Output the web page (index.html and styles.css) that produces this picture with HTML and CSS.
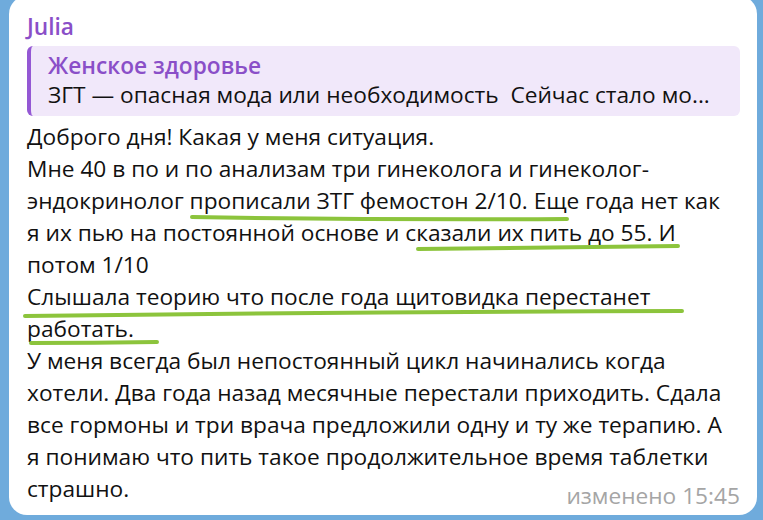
FILE: index.html
```html
<!DOCTYPE html>
<html lang="ru">
<head>
<meta charset="utf-8">
<link rel="stylesheet" href="styles.css">
</head>
<body>
<div class="bubble">
  <div class="author">Julia</div>
  <div class="quote">
    <div class="quote-title">Женское здоровье</div>
    <div class="quote-text">ЗГТ — опасная мода или необходимость&nbsp; Сейчас стало мо...</div>
  </div>
  <div class="body">
    Доброго дня! Какая у меня ситуация.<br>
    Мне 40 в по и по анализам три гинеколога и гинеколог-<br>
    эндокринолог прописали ЗТГ фемостон 2/10. Еще года нет как<br>
    я их пью на постоянной основе и сказали их пить до 55. И<br>
    потом 1/10<br>
    Слышала теорию что после года щитовидка перестанет<br>
    работать.<br>
    У меня всегда был непостоянный цикл начинались когда<br>
    хотели. Два года назад месячные перестали приходить. Сдала<br>
    все гормоны и три врача предложили одну и ту же терапию. А<br>
    я понимаю что пить такое продолжительное время таблетки<br>
    страшно.
  </div>
  <div class="time">изменено 15:45</div>
</div>
<svg class="marks" width="763" height="520" viewBox="0 0 763 520">
  <path d="M192 217 Q380 220 567 219" />
  <path d="M418 249 Q550 248 678 246" />
  <path d="M25 316 Q350 312 682 311" />
  <path d="M31 343 Q95 343 157 342" />
</svg>
</body>
</html>
```

FILE: styles.css
```css
html, body {
  margin: 0;
  padding: 0;
}
body {
  width: 763px;
  height: 520px;
  background: #6fabdc;
  overflow: hidden;
  position: relative;
  font-family: "Open Sans", "Noto Sans", sans-serif;
}
.bubble {
  box-sizing: border-box;
  margin: -4px 0 0 9px;
  width: 748px;
  height: 519px;
  background: #ffffff;
  border-radius: 18px;
  padding: 18px 17px 0 18px;
  display: flex;
  flex-direction: column;
}
.author {
  color: #8a4fc8;
  font-weight: 600;
  font-size: 22.7px;
  line-height: 26px;
}
.quote {
  margin-top: 6px;
  height: 70px;
  box-sizing: border-box;
  background: #f1e8fa;
  border-left: 4px solid #9458d4;
  border-radius: 6px;
  padding: 5px 10px 0 17px;
  white-space: nowrap;
}
.quote-title {
  color: #8a4fc8;
  font-weight: 600;
  font-size: 22.7px;
  line-height: 29px;
}
.quote-text {
  color: #111111;
  font-size: 22.7px;
  line-height: 29px;
}
.body {
  margin-top: 5px;
  color: #111111;
  font-size: 22.7px;
  line-height: 32px;
  white-space: nowrap;
}
.time {
  align-self: flex-end;
  margin-top: -21px;
  color: #a5a5a5;
  font-size: 22.7px;
  line-height: 24px;
}
.marks {
  position: absolute;
  left: 0;
  top: 0;
}
.marks path {
  fill: none;
  stroke: #8cc43c;
  stroke-width: 4;
  stroke-linecap: round;
}
```
